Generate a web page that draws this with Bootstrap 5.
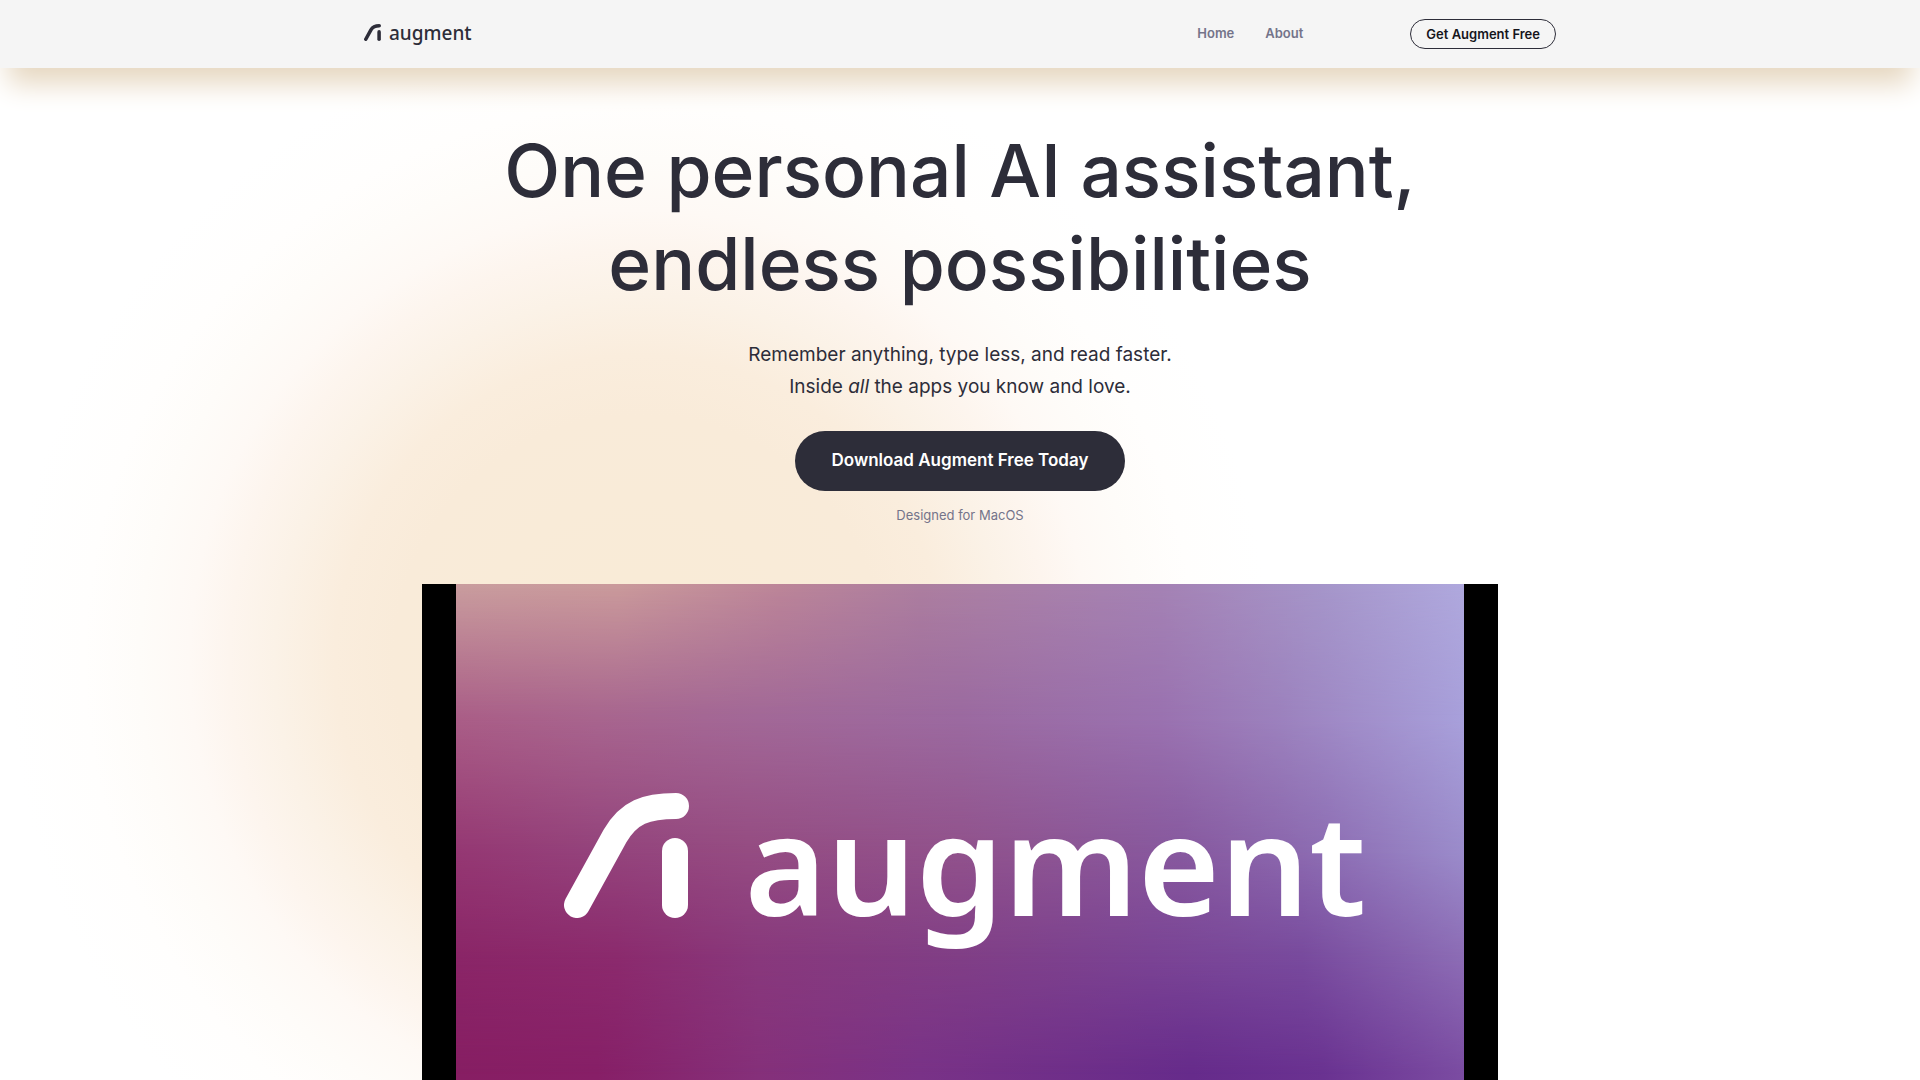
<!DOCTYPE html>
<html lang="en">
<head>
<meta charset="utf-8">
<meta name="viewport" content="width=device-width, initial-scale=1">
<title>Augment</title>
<link rel="stylesheet" href="https://cdn.jsdelivr.net/npm/bootstrap@5.3.0/dist/css/bootstrap.min.css">
<style>
  :root { --ink: #2d2d39; --muted: #74748a; }
  body { font-family: Inter, "Liberation Sans", sans-serif; color: var(--ink); background: #fff; }
  .site-wrap { max-width: 1216px; }
  .site-bar { min-height: 68px; background: #f5f5f5; box-shadow: 0 24px 28px -8px #e6d7c0; z-index: 2; }
  .brand-link { color: var(--ink); padding-bottom: 3px; }
  .brand-mark { width: 17px; height: 17px; }
  .brand-word { font: 500 19px/26px "Noto Sans", sans-serif; }
  .site-nav { gap: 31px; margin-right: 107px; padding-bottom: 2px; }
  .site-nav .nav-link { font-size: 13px; line-height: 20px; font-weight: 600; color: var(--muted); }
  .btn-outline-ink { height: 30px; padding: 0 15px; border: 1px solid var(--ink); font-size: 13px; line-height: 26px; font-weight: 600; color: #15151c; }
  .btn-outline-ink:hover, .btn-ink:hover { background: #44444f; color: #fff; }

  .hero { padding-top: 56px;
    background: radial-gradient(circle at 33.3% 592px, #f9ebd6 0, #f9ebd9 245px, #faeddd 305px, #fbf2e7 365px, #fdf5ee 410px, #fef9f5 450px, #fefcf9 500px, #fffefd 555px, #fff 630px) no-repeat; }
  .hero-title { font-size: 73px; line-height: 93px; font-weight: 500; margin-bottom: 29px; }
  .hero-lead { font-size: 19px; line-height: 32px; margin-bottom: 28px; }
  .btn-ink { height: 60px; width: 330px; background: var(--ink); color: #fff; font-size: 17px; font-weight: 600; }
  .hero-note { font-size: 13px; line-height: 20px; color: var(--muted); margin: 14px 0 59px; }

  .clip { max-width: 1076px; aspect-ratio: 16 / 9; background: #000; padding: 0 34px; }
  .clip-poster { background: linear-gradient(90deg, #871e63, #871f67 14%, #85307a 30%, #793287 46%, #662b8b 73%, #6a3291 86%, #7b4ca2); }
  .tint { position: absolute; inset: 0; }
  .tint-4 { background: linear-gradient(90deg, #8a2567, #8b2a6d 16%, #88387c 30%, #803e86 50%, #7a4394 69%, #784a9d 84%, #8c6cb5); -webkit-mask-image: linear-gradient(#000 62%, transparent 81%); mask-image: linear-gradient(#000 62%, transparent 81%); }
  .tint-3 { background: linear-gradient(90deg, #953873, #94437c 14%, #954c82 29%, #91528c 50%, #87599f 72%, #8d6db3 86%, #9b8ccb); -webkit-mask-image: linear-gradient(#000 44%, transparent 62%); mask-image: linear-gradient(#000 44%, transparent 62%); }
  .tint-2 { background: linear-gradient(90deg, #aa5e87, #a8658e 14%, #a26897 30%, #9b6aa0 50%, #9a72b0 70%, #9c82be 82%, #a8a0db); -webkit-mask-image: linear-gradient(#000 22%, transparent 44%); mask-image: linear-gradient(#000 22%, transparent 44%); }
  .tint-1 { background: linear-gradient(90deg, #c99d9e, #ca9a9b 16%, #bc8598 32%, #ac7e9f 46%, #a482b4 70%, #a595c9 86%, #afa8dd); -webkit-mask-image: linear-gradient(#000, transparent 22%); mask-image: linear-gradient(#000, transparent 22%); }
  .poster-logo { gap: 56px; padding: 0 0 62px 10px; }
  .poster-mark { width: 125px; height: 125px; }
  .poster-word { font: 600 140px/160px "Noto Sans", sans-serif; padding-top: 12px; }
</style>
</head>
<body>
<svg class="d-none" aria-hidden="true">
  <symbol id="mark" viewBox="0 0 125 125">
    <g fill="none" stroke="currentColor" stroke-width="26" stroke-linecap="round" stroke-linejoin="round">
      <path d="M13 112 L51 43 C65 19 82 13 112 13"/>
      <path d="M111 58 V112"/>
    </g>
  </symbol>
</svg>

<header class="site-bar sticky-top d-flex align-items-center">
  <div class="container-fluid site-wrap d-flex align-items-center">
    <a class="brand-link d-flex align-items-center gap-2 text-decoration-none me-auto" href="#" aria-label="augment">
      <svg class="brand-mark" aria-hidden="true"><use href="#mark"/></svg>
      <span class="brand-word">augment</span>
    </a>
    <nav class="nav site-nav">
      <a class="nav-link p-0" href="#">Home</a>
      <a class="nav-link p-0" href="#">About</a>
    </nav>
    <button type="button" class="btn btn-outline-ink rounded-pill">Get Augment Free</button>
  </div>
</header>

<main class="hero text-center">
  <div class="container-fluid site-wrap">
    <h1 class="hero-title">One personal AI assistant,<br>endless possibilities</h1>
    <p class="hero-lead">Remember anything, type less, and read faster.<br>Inside <em>all</em> the apps you know and love.</p>
    <button type="button" class="btn btn-ink rounded-pill">Download Augment Free Today</button>
    <p class="hero-note">Designed for MacOS</p>
    <div class="clip mx-auto">
      <div class="clip-poster position-relative h-100">
        <div class="tint tint-4"></div>
        <div class="tint tint-3"></div>
        <div class="tint tint-2"></div>
        <div class="tint tint-1"></div>
        <div class="poster-logo position-relative h-100 d-flex align-items-center justify-content-center text-white">
          <svg class="poster-mark" aria-hidden="true"><use href="#mark"/></svg>
          <span class="poster-word">augment</span>
        </div>
      </div>
    </div>
  </div>
</main>
<script src="https://cdn.jsdelivr.net/npm/bootstrap@5.3.0/dist/js/bootstrap.bundle.min.js"></script>
</body>
</html>
